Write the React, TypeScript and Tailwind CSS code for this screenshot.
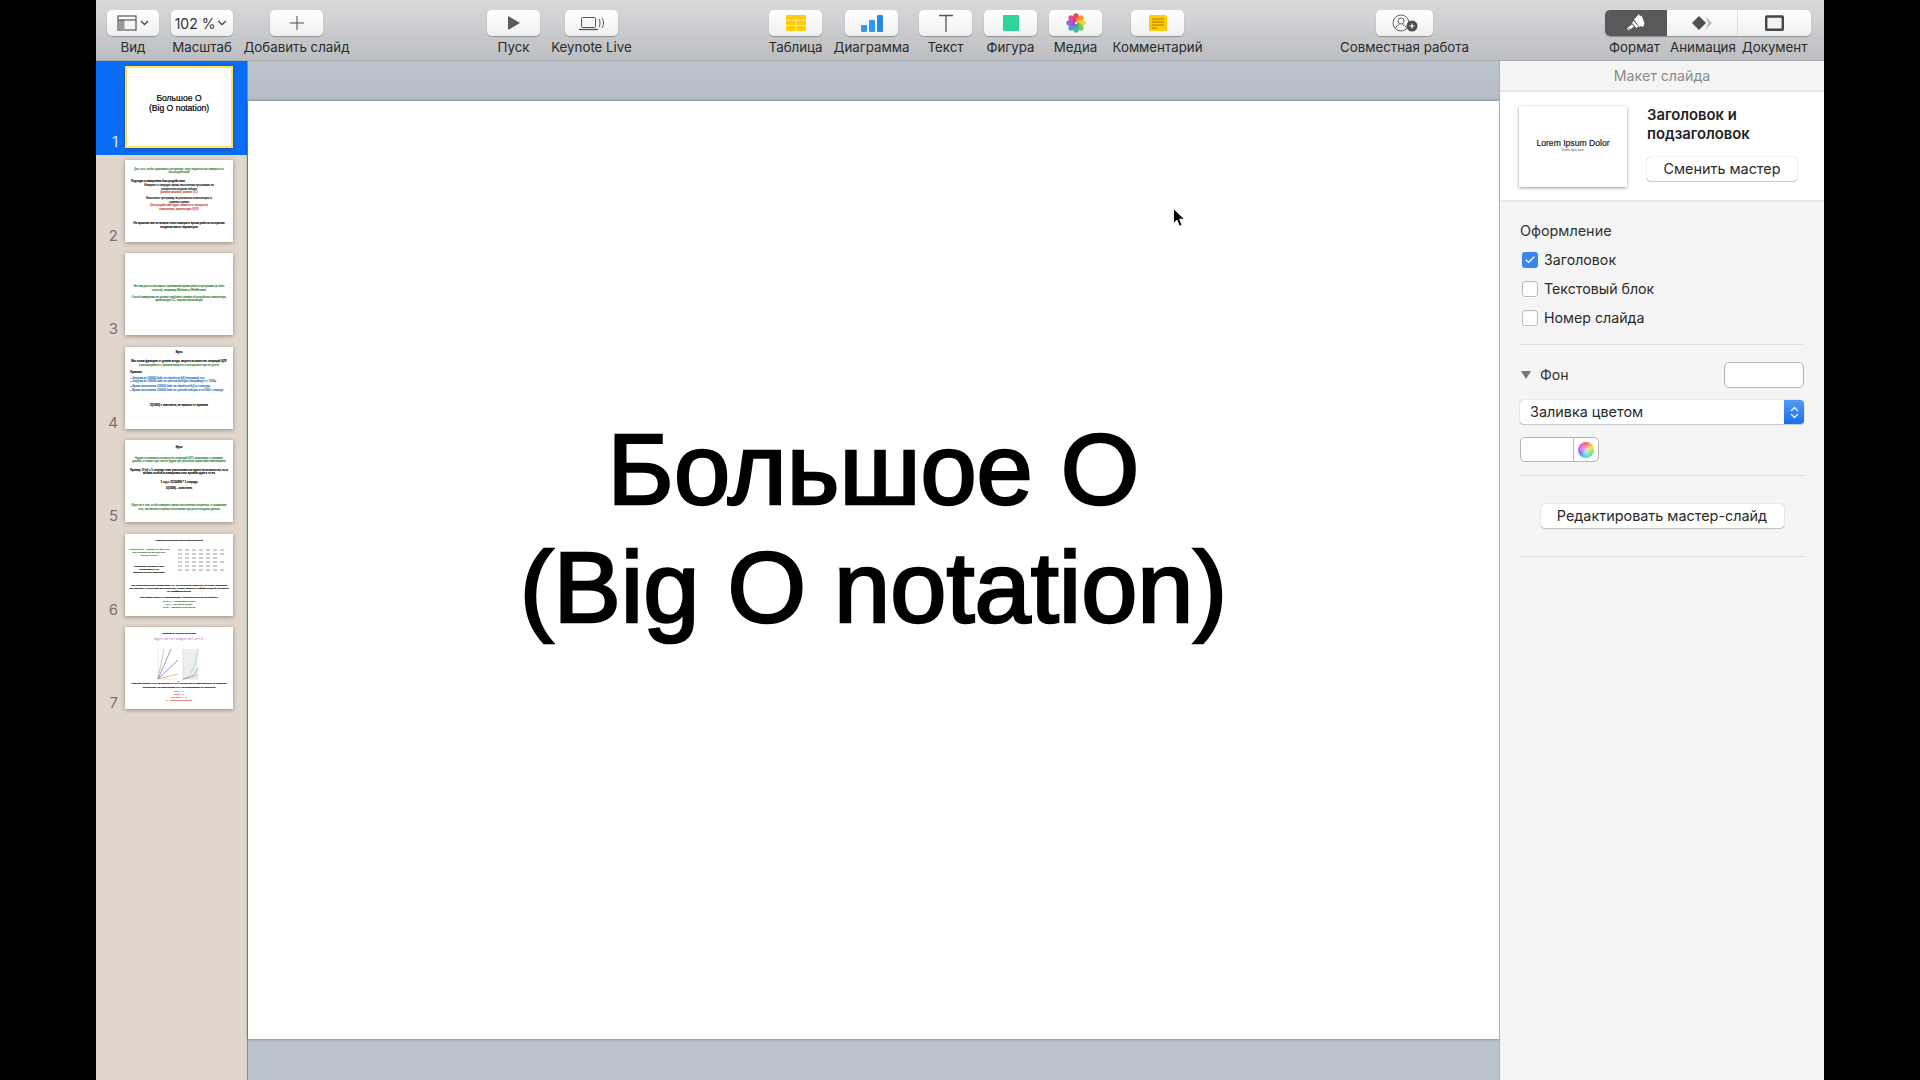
import type { ReactNode } from "react";
import { ChevronDown, Check, ChevronsUpDown } from "lucide-react";

function ToolItem({
  label,
  className,
  children,
}: {
  label: string;
  className: string;
  children: ReactNode;
}) {
  return (
    <div className={`flex shrink-0 flex-col items-center ${className}`}>
      <div className="flex h-[26px] w-full items-center justify-center rounded-[5px] bg-gradient-to-b from-white to-[#f0f0f1] shadow-[0_1px_1px_rgba(0,0,0,0.28)]">
        {children}
      </div>
      <span className="mt-[3px] whitespace-nowrap text-[13.3px] leading-[16px] text-[#2b2b2b]">
        {label}
      </span>
    </div>
  );
}

function MediaIcon() {
  const petals = [
    ["#f0392e", 0],
    ["#f7902b", 45],
    ["#f6d32e", 90],
    ["#6cc83f", 135],
    ["#35b98e", 180],
    ["#4a8fe0", 225],
    ["#8a60c9", 270],
    ["#d8409c", 315],
  ] as const;
  return (
    <svg width="20" height="20" viewBox="0 0 20 20">
      {petals.map(([color, angle]) => (
        <ellipse
          key={angle}
          cx="10"
          cy="5"
          rx="3"
          ry="4.8"
          fill={color}
          fillOpacity="0.92"
          transform={`rotate(${angle} 10 10)`}
        />
      ))}
      <circle cx="10" cy="10" r="1" fill="#fff" />
    </svg>
  );
}

function Num({ n, active }: { n: number; active?: boolean }) {
  return (
    <span
      className={`-mb-[3px] w-[22px] self-end text-right text-[15px] leading-[18px] ${
        active ? "text-[#d8e8ff]" : "text-[#77736e]"
      }`}
    >
      {n}
    </span>
  );
}

function Thumb({
  n,
  active,
  children,
}: {
  n: number;
  active?: boolean;
  children: ReactNode;
}) {
  return (
    <div
      className={`flex h-[93.5px] shrink-0 items-start pt-[5px] ${
        active ? "bg-[#0a6df5]" : ""
      }`}
    >
      <div className="flex h-[82px] items-stretch">
        <Num n={n} active={active} />
        <div
          className={`ml-[7px] flex h-[82px] w-[108px] flex-col overflow-hidden bg-white font-['Liberation_Sans',sans-serif] text-[2.7px] leading-[3.6px] text-[#111] shadow-[0_1px_4px_rgba(60,45,30,0.45)] [-webkit-text-stroke:0.12px_currentColor] ${
            active ? "border-2 border-[#ffe45e]" : ""
          }`}
        >
          {children}
        </div>
      </div>
    </div>
  );
}

function Checkbox({ label, checked }: { label: string; checked?: boolean }) {
  return (
    <div className="flex h-[29px] items-center">
      <span
        className={`flex size-[16px] items-center justify-center rounded-[3px] ${
          checked
            ? "bg-[#3a85f0]"
            : "border border-[#bdbdbd] bg-white shadow-[inset_0_1px_1px_rgba(0,0,0,0.05)]"
        }`}
      >
        {checked ? <Check className="size-[12px] text-white" strokeWidth={2.4} /> : null}
      </span>
      <span className="ml-[6px] text-[14.2px] text-[#2a2a2a]">{label}</span>
    </div>
  );
}

function PlainButton({ className, label }: { className: string; label: string }) {
  return (
    <div
      className={`flex h-[24px] items-center justify-center rounded-[4px] bg-white text-[14.4px] text-[#2a2a2a] shadow-[0_0_1px_rgba(0,0,0,0.4),0_1px_1px_rgba(0,0,0,0.18)] ${className}`}
    >
      {label}
    </div>
  );
}

export default function App() {
  return (
    <div className="flex h-[1080px] w-[1920px] justify-center overflow-hidden bg-black font-['Inter',sans-serif]">
      <div className="relative flex h-full w-[1728px] flex-col">
        {/* toolbar */}
        <div className="flex h-[61px] shrink-0 border-b border-[#a9aaad] bg-gradient-to-b from-[#d8dadc] to-[#bcbec1] pl-[11px] pt-[10px]">
          <ToolItem label="Вид" className="w-[52px]">
            <svg width="32" height="16" viewBox="0 0 32 16" fill="none">
              <rect x="1" y="1" width="18" height="14" stroke="#555" strokeWidth="1.2" />
              <rect x="1.5" y="5" width="6" height="10" fill="#999" />
              <line x1="1" y1="5" x2="19" y2="5" stroke="#555" strokeWidth="1.2" />
              <path d="M24 6l3.5 3.5L31 6" stroke="#444" strokeWidth="1.4" />
            </svg>
          </ToolItem>
          <ToolItem label="Масштаб" className="ml-[12px] w-[62px]">
            <span className="text-[14px] text-[#333]">102 %</span>
            <ChevronDown className="size-[14px] text-[#444]" strokeWidth={2} />
          </ToolItem>
          <ToolItem label="Добавить слайд" className="ml-[37px] w-[53px]">
            <svg width="16" height="16" viewBox="0 0 16 16" stroke="#666" strokeWidth="1.2">
              <line x1="8" y1="1" x2="8" y2="15" />
              <line x1="1" y1="8" x2="15" y2="8" />
            </svg>
          </ToolItem>
          <ToolItem label="Пуск" className="ml-[164px] w-[53px]">
            <svg width="14" height="16" viewBox="0 0 14 16">
              <path d="M1 1l12 7-12 7z" fill="#5a5a5a" />
            </svg>
          </ToolItem>
          <ToolItem label="Keynote Live" className="ml-[25px] w-[53px]">
            <svg width="28" height="16" viewBox="0 0 28 16" fill="none" stroke="#555">
              <rect x="3.5" y="2.5" width="14" height="10" rx="1" />
              <line x1="1" y1="14.5" x2="20" y2="14.5" strokeWidth="1.3" />
              <path d="M21 4c1.4 2.4 1.4 5.6 0 8M24 3c2 3 2 7 0 10" strokeWidth="1" />
            </svg>
          </ToolItem>
          <ToolItem label="Таблица" className="ml-[151px] w-[53px]">
            <svg width="20" height="16" viewBox="0 0 20 16">
              <rect width="20" height="16" rx="1" fill="#ffcb05" />
              <path d="M0 5.2h20M0 10.6h20M10 5.2V16" stroke="#fff3b0" strokeWidth="0.9" />
            </svg>
          </ToolItem>
          <ToolItem label="Диаграмма" className="ml-[23px] w-[53px]">
            <svg width="22" height="17" viewBox="0 0 22 17">
              <rect x="0" y="10" width="6" height="7" rx="1" fill="#2f97ee" />
              <rect x="8" y="5" width="6" height="12" rx="1" fill="#2f97ee" />
              <rect x="16" y="0" width="6" height="17" rx="1" fill="#2b86e6" />
            </svg>
          </ToolItem>
          <ToolItem label="Текст" className="ml-[21px] w-[53px]">
            <svg width="16" height="18" viewBox="0 0 16 18" fill="none" stroke="#555" strokeWidth="1.3">
              <path d="M1 1.5h14M8 1.5V18" />
            </svg>
          </ToolItem>
          <ToolItem label="Фигура" className="ml-[12px] w-[53px]">
            <span className="size-[16px] rounded-[1px] bg-[#30d39a]" />
          </ToolItem>
          <ToolItem label="Медиа" className="ml-[12px] w-[53px]">
            <MediaIcon />
          </ToolItem>
          <ToolItem label="Комментарий" className="ml-[29px] w-[53px]">
            <svg width="18" height="16" viewBox="0 0 18 16">
              <rect width="18" height="16" rx="1.5" fill="#ffcb05" />
              <path d="M3 4h12M3 7h12M3 10h12M3 13h5" stroke="#a07a10" strokeWidth="1" />
            </svg>
          </ToolItem>
          <ToolItem label="Совместная работа" className="ml-[192px] w-[57px]">
            <svg width="26" height="18" viewBox="0 0 26 18" fill="none">
              <circle cx="9" cy="9" r="8" stroke="#666" strokeWidth="1" />
              <circle cx="9" cy="7" r="3" stroke="#666" strokeWidth="1" />
              <path d="M3.5 14.5c1-3 2.6-3.5 4-4M14.5 14.5c-1-3-2.6-3.5-4-4" stroke="#666" strokeWidth="1" />
              <circle cx="20" cy="12" r="5.5" fill="#4d4d4d" />
              <path d="M20 9.5v5M17.5 12h5" stroke="#fff" strokeWidth="1.2" />
            </svg>
          </ToolItem>
          <div className="ml-[172px] flex shrink-0 flex-col">
            <div className="flex h-[26px] w-[206px] overflow-hidden rounded-[5px] bg-gradient-to-b from-white to-[#f0f0f1] shadow-[0_1px_1px_rgba(0,0,0,0.28)]">
              <div className="flex w-[62px] items-center justify-center bg-[#59595b]">
                <svg width="20" height="20" viewBox="0 0 20 20" fill="#fff">
                  <path d="M8 6.5L13 1l1 2.5 1.5-1L17 6l1.5 4.5-1.5 3.5-2.5-1-1 1z" />
                  <path d="M7.5 8l5 5.5-2 1.5-4.5-5z" />
                  <path d="M6 11.5l-4.5 3.3c-1 1 .7 3 1.800 2.200L8 13.500z" />
                  <circle cx="3" cy="15.7" r="0.8" fill="#59595b" />
                </svg>
              </div>
              <div className="flex w-[71px] items-center justify-center border-r border-[#dcdcdc]">
                <svg width="22" height="16" viewBox="0 0 22 16">
                  <path d="M8 1l7 7-7 7-7-7z" fill="#4f4f4f" />
                  <path d="M14 1l7 7-7 7 3.5-7z" fill="#b8b8b8" />
                </svg>
              </div>
              <div className="flex w-[73px] items-center justify-center">
                <svg width="19" height="16" viewBox="0 0 19 16" fill="none">
                  <rect x="0.5" y="0.5" width="18" height="15" rx="1" fill="#f2f2f2" />
                  <rect x="1.2" y="1.5" width="16.6" height="13.3" rx="0.5" stroke="#474747" strokeWidth="2.4" />
                </svg>
              </div>
            </div>
            <div className="mt-[3px] flex h-[16px] w-[206px] whitespace-nowrap text-[13.3px] leading-[16px] text-[#2b2b2b]">
              <span className="ml-[4px]">Формат</span>
              <span className="ml-[10px]">Анимация</span>
              <span className="ml-[6px]">Документ</span>
            </div>
          </div>
        </div>

        <div className="flex min-h-0 flex-1">
          {/* slide navigator */}
          <div className="flex w-[152px] shrink-0 flex-col border-r border-[#8f8d8a] bg-[#e0d6cc]">
            <Thumb n={1} active>
              <div className="flex flex-1 flex-col items-center pt-[25px] text-[8.6px] leading-[10px] text-black [-webkit-text-stroke:0.2px_black]">
                <p>Большое О</p>
                <p>(Big O notation)</p>
              </div>
            </Thumb>
            <Thumb n={2}>
              <div className="flex flex-1 flex-col px-[6px] pt-[8px]">
                <p className="text-center text-[#2f7d32]">Для того, чтобы сравнивать алгоритмы, надо научиться их измерять по быстродействию</p>
                <p className="mt-[5px] font-bold">Подходы к измерению быстродействия:</p>
                <div className="mt-[1px] px-[11px] text-center">
                  <p>Измерить в секундах время выполнения программы на конкретном входном наборе</p>
                  <p className="text-[#c0392b]">(разные машины, разные ОС)</p>
                  <p className="mt-[2px]">Выполнить программу на различных компьютерах и сравнить время</p>
                  <p className="text-[#c0392b]">(быстродействие будет зависеть от мощности компьютера, архитектуры ЦПУ)</p>
                </div>
                <p className="mt-[11px] text-center font-bold">На практике мы не можем точно измерить время работы алгоритма входным много параметров</p>
              </div>
            </Thumb>
            <Thumb n={3}>
              <div className="flex flex-1 flex-col justify-center px-[5px] text-center text-[#1f7a24]">
                <p>Не нам для потом самого сравниваем время работы программы (в небо отчасти), например Windows и WebBrowser</p>
                <p className="mt-[3px]">Способ измерения не должен требовать знания об устройстве компьютера, архитектуре ОС, версии компилятора</p>
              </div>
            </Thumb>
            <Thumb n={4}>
              <div className="flex flex-1 flex-col px-[5px] pt-[4px]">
                <p className="text-center font-bold">Идея</p>
                <p className="mt-[6px] whitespace-nowrap text-center font-bold">Мы хотим функцию от длины входа, мерить количество операций ЦПУ</p>
                <p className="text-center text-[#2f7d32]">и рассматривать с увеличением этого алгоритмов при его росте</p>
                <p className="mt-[4px] font-bold">Правила:</p>
                <div className="mt-[2px] text-[#2a6bb0]">
                  <p>– Загрузка из 100000 байт на обработку БД (например) в n²</p>
                  <p>– Загрузка из 100000 байт на третьей выборке (например) n × 1000µ</p>
                  <p className="mt-[1px]">– Время выполнения 100000 байт на обработке БД = n секунды</p>
                  <p>– Время выполнения 100000 байт на третьей выборке = n×1000⁻¹ секунды</p>
                </div>
                <p className="mt-[12px] text-center font-bold">O(1000) = константа, не зависит от времени</p>
              </div>
            </Thumb>
            <Thumb n={5}>
              <div className="flex flex-1 flex-col px-[5px] pt-[6px] text-center">
                <p className="font-bold">Идея</p>
                <p className="mt-[7px] text-[#2f7d32]">Будем отслеживать количество операций ЦПУ, зависящих от размера данных, а значит при том не будем про реальные характеристики машины</p>
                <p className="mt-[5px] font-bold">Пример: О (n) + 1 секунда тоже увеличивается вдвое на количество, но и можем отличить измерения этих времён один и те же</p>
                <p className="mt-[5px] font-bold">1 год = 31536000 * 1 секунда</p>
                <p className="mt-[2px] font-bold">O(1000) – константа</p>
                <p className="mt-[14px] text-[#2f7d32]">Идея не в том, чтобы измерить время выполнения алгоритма, а понимание того, как меняется время выполнения при росте входных данных</p>
              </div>
            </Thumb>
            <Thumb n={6}>
              <div className="flex flex-1 flex-col px-[3px] pt-[5px] text-[2.5px] leading-[3.3px]">
                <p className="text-center font-bold">Асимптотическая оценка вычислений</p>
                <div className="mt-[6px] flex">
                  <div className="w-[42px] text-center">
                    <p className="text-[#2f7d32]">Асимптотика – поведение функции при стремлении аргумента к бесконечности</p>
                    <p className="mt-[7px] font-bold">Позволяет выбрать при</p>
                    <p className="font-bold">Сравнивать и в</p>
                    <p className="font-bold">бесконечность например</p>
                  </div>
                  <svg className="ml-[6px]" width="52" height="24" viewBox="0 0 52 24" stroke="#8e8e8e" strokeWidth="0.9" strokeDasharray="4 3">
                    <path d="M2 2h48M2 6h48M2 10h40M2 14h48M2 18h40M2 22h48" />
                  </svg>
                </div>
                <p className="mt-[9px] text-center font-bold">Эта характеристика показывает то, как алгоритм работает на очень больших аргументах, а почти все достоинства, чтобы сделать и эффективный алгоритм от коэффициентов</p>
                <p className="mt-[3px] text-center font-bold">Мы ищем оценку и отбрасываем, когда достаточно большое n</p>
                <p className="text-center text-[#2f7d32]">O(log n) = логарифмическая</p>
                <p className="text-center text-[#2f7d32]">O(n) = линейная время</p>
                <p className="text-center text-[#2f7d32]">O(n²) = квадратичная время</p>
              </div>
            </Thumb>
            <Thumb n={7}>
              <div className="flex flex-1 flex-col items-center pt-[5px] text-[2.5px] leading-[3.2px]">
                <p className="font-bold">Наиболее частые значения</p>
                <p className="mt-[3px] text-[3px] text-[#c08ad8]">log n &lt; √n &lt; n &lt; n log n &lt; n² &lt; n³ &lt; 2ⁿ</p>
                <svg className="mt-[7px]" width="50" height="33" viewBox="0 0 50 33" fill="none" strokeWidth="0.7">
                  <rect x="29" y="1" width="15" height="30" fill="#eeeeee" stroke="none" />
                  <path d="M4 1v30h20M29 1v30h15" stroke="#cfcfcf" strokeWidth="0.5" />
                  <path d="M4 31L10 1" stroke="#9bbf8a" />
                  <path d="M4 31L17 1" stroke="#a05ab0" />
                  <path d="M4 31L24 12" stroke="#5a5ac0" />
                  <path d="M4 31L24 26" stroke="#c8a050" />
                  <path d="M29 31C36 30 41 20 44 1" stroke="#9ad0e0" />
                  <path d="M29 31C35 30 41 28 44 20" stroke="#b080c0" />
                  <path d="M29 31L44 27" stroke="#c8a050" />
                </svg>
                <p className="mt-[1px] px-[3px] text-center font-bold">Получив оценку O(n) алгоритма и O(n²) алгоритма в зависимости от размера, алгоритмы на количестве ЦПУ сопровождаем на практике</p>
                <p className="mt-[1px] text-center text-[#e33a3a]">O(n) = 1</p>
                <p className="text-center text-[#e33a3a]">O(n²) = n</p>
                <p className="text-center text-[#e33a3a]">O(n log n) = n</p>
                <p className="text-center text-[#e33a3a]">n = 1000000 операций</p>
              </div>
            </Thumb>
          </div>

          {/* slide canvas */}
          <div className="flex w-[1251px] shrink-0 flex-col bg-[#bbc3cd]">
            <div className="h-[40px] shrink-0 bg-gradient-to-b from-[#bcc4ce] to-[#b5bcc6]" />
            <div className="flex h-[938px] shrink-0 flex-col items-center justify-center bg-white pb-[84px] font-['Liberation_Sans',sans-serif] text-[101px] leading-[118px] text-black shadow-[0_0_3px_rgba(0,0,0,0.45)] [-webkit-text-stroke:2.6px_black]">
              <p>Большое О</p>
              <p>(Big O notation)</p>
            </div>
          </div>

          {/* inspector */}
          <div className="flex min-w-0 flex-1 flex-col border-l border-[#b0b0b0] bg-[#f5f5f5]">
            <div className="flex h-[31px] shrink-0 items-center justify-center border-b-2 border-[#e6e6e6] text-[14.2px] text-[#8a8a8a]">
              Макет слайда
            </div>
            <div className="flex h-[110px] shrink-0 border-b-2 border-[#e8e8e8] bg-white pl-[19px] pt-[14px]">
              <div className="flex h-[81px] w-[108px] shrink-0 flex-col items-center justify-center bg-white pb-[4px] font-['Liberation_Sans',sans-serif] shadow-[0_1px_3px_rgba(0,0,0,0.4)]">
                <p className="text-[8.6px] leading-[10px] text-[#222] [-webkit-text-stroke:0.2px_#222]">Lorem Ipsum Dolor</p>
                <p className="text-[3px] leading-[4px] text-[#444]">Donec quis nunc</p>
              </div>
              <div className="ml-[20px] flex flex-col">
                <p className="text-[14.8px] font-semibold leading-[19px] text-[#222]">
                  Заголовок и
                  <br />
                  подзаголовок
                </p>
                <PlainButton className="mt-[13px] w-[150px]" label="Сменить мастер" />
              </div>
            </div>
            <div className="flex flex-col px-[20px] pt-[19px]">
              <p className="text-[14.4px] leading-[20px] text-[#333]">Оформление</p>
              <div className="mt-[4px] pl-[2px]">
                <Checkbox label="Заголовок" checked />
                <Checkbox label="Текстовый блок" />
                <Checkbox label="Номер слайда" />
              </div>
              <div className="mt-[12px] h-px bg-[#dcdcdc]" />
              <div className="mt-[17px] flex h-[26px] items-center">
                <span className="ml-[1px] size-0 border-x-[5px] border-t-[8px] border-x-transparent border-t-[#777]" />
                <span className="ml-[9px] text-[14.2px] text-[#333]">Фон</span>
                <span className="ml-auto h-[26px] w-[80px] rounded-[5px] border border-[#b5b5b5] bg-white" />
              </div>
              <div className="mt-[12px] flex h-[24px] items-center justify-between overflow-hidden rounded-[4px] bg-white shadow-[0_0_1px_rgba(0,0,0,0.45),0_1px_1px_rgba(0,0,0,0.15)]">
                <span className="ml-[10px] text-[14.4px] text-[#2a2a2a]">Заливка цветом</span>
                <span className="flex h-full w-[20px] items-center justify-center bg-gradient-to-b from-[#4f9bf3] to-[#1c6fe8]">
                  <ChevronsUpDown className="size-[15px] text-white" strokeWidth={2} />
                </span>
              </div>
              <div className="mt-[13px] flex h-[25px] w-[79px] overflow-hidden rounded-[5px] border border-[#b5b5b5] bg-white">
                <span className="w-[53px] border-r border-[#bdbdbd]" />
                <span className="flex flex-1 items-center justify-center">
                  <span className="size-[16px] rounded-full bg-[conic-gradient(#ff5a5a,#ffd84a,#6fe36f,#5ad8e8,#5a7fff,#e85ae8,#ff5a5a)]">
                    <span className="m-[4px] block size-[8px] rounded-full bg-white/70 blur-[2px]" />
                  </span>
                </span>
              </div>
              <div className="mt-[13px] h-px bg-[#dcdcdc]" />
              <PlainButton className="mx-auto mt-[28px] w-[243px]" label="Редактировать мастер-слайд" />
              <div className="mt-[28px] h-px bg-[#dcdcdc]" />
            </div>
          </div>
        </div>

        {/* mouse pointer */}
        <svg className="absolute left-[1076px] top-[207px]" width="14" height="22" viewBox="0 0 14 22">
          <path d="M1.5 1.5v15l3.5-3.3 2.5 6 2.6-1-2.5-6h4.9z" fill="#000" stroke="#fff" strokeWidth="0.9" />
        </svg>
      </div>
    </div>
  );
}
